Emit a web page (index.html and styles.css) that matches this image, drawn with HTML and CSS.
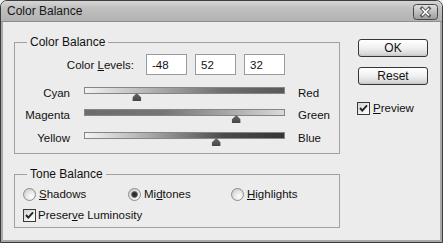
FILE: index.html
```html
<!DOCTYPE html>
<html>
<head>
  <title>Color Balance</title>
  <link rel="stylesheet" href="styles.css">
</head>
<body>
  <div class="window">
    <div class="titlebar">
      <span class="title">Color Balance</span>
      <span class="close">
        <svg width="25" height="16" viewBox="0 0 25 16">
          <defs>
            <linearGradient id="closeFill" x1="0" y1="0" x2="0" y2="1">
              <stop offset="0" stop-color="#e2e2e2"/>
              <stop offset="1" stop-color="#9c9c9c"/>
            </linearGradient>
          </defs>
          <rect x="0.5" y="0.5" width="24" height="15" rx="3" fill="url(#closeFill)" stroke="#484848"/>
          <path d="M9 4.5 L16 11.5 M16 4.5 L9 11.5" stroke="#5a5a5a" stroke-width="3.4" stroke-linecap="square"/>
          <path d="M9 4.5 L16 11.5 M16 4.5 L9 11.5" stroke="#fff" stroke-width="1.7"/>
        </svg>
      </span>
    </div>

    <div class="content">
      <div class="main">
        <fieldset class="group">
          <legend>Color Balance</legend>
          <div class="levels">
            <label class="levels-label">Color <u>L</u>evels:</label>
            <input class="field" type="text" value="-48">
            <input class="field" type="text" value="52">
            <input class="field" type="text" value="32">
          </div>
          <div class="sliders">
            <span class="name">Cyan</span>
            <div class="track cyan-red"><span class="thumb" style="left: 26%"></span></div>
            <span class="end">Red</span>

            <span class="name">Magenta</span>
            <div class="track magenta-green"><span class="thumb" style="left: 76%"></span></div>
            <span class="end">Green</span>

            <span class="name">Yellow</span>
            <div class="track yellow-blue"><span class="thumb" style="left: 66%"></span></div>
            <span class="end">Blue</span>
          </div>
        </fieldset>

        <fieldset class="group tone">
          <legend>Tone Balance</legend>
          <div class="tone-body">
            <div class="radios">
              <label class="option"><span class="radio"></span><span><u>S</u>hadows</span></label>
              <label class="option"><span class="radio on"></span><span>Mi<u>d</u>tones</span></label>
              <label class="option"><span class="radio"></span><span><u>H</u>ighlights</span></label>
            </div>
            <label class="option preserve">
              <span class="box">
                <svg width="11" height="11" viewBox="0 0 11 11"><path d="M2 5 L4.3 7.6 L9 2.4" fill="none" stroke="#222" stroke-width="1.9"/></svg>
              </span>
              <span>Preser<u>v</u>e Luminosity</span>
            </label>
          </div>
        </fieldset>
      </div>

      <div class="side">
        <button class="button">OK</button>
        <button class="button reset">Reset</button>
        <label class="option preview">
          <span class="box">
            <svg width="11" height="11" viewBox="0 0 11 11"><path d="M2 5 L4.3 7.6 L9 2.4" fill="none" stroke="#222" stroke-width="1.9"/></svg>
          </span>
          <span><u>P</u>review</span>
        </label>
      </div>
    </div>
  </div>
</body>
</html>
```

FILE: styles.css
```css
html, body {
  margin: 0;
  padding: 0;
}

body {
  font-family: "Liberation Sans", Arial, sans-serif;
  font-size: 11.5px;
  color: #111;
  background: #ececec;
}

.window {
  width: 443px;
  height: 243px;
  box-sizing: border-box;
  border: 1px solid #3c3c3c;
  border-radius: 7px 7px 0 0;
  background: #ececec;
  display: flex;
  flex-direction: column;
  overflow: hidden;
}

.titlebar {
  height: 21px;
  flex: none;
  box-sizing: border-box;
  display: flex;
  align-items: center;
  justify-content: space-between;
  padding: 0 4px 0 6px;
  background: linear-gradient(to bottom, #d6d6d6 0%, #c0c0c0 35%, #b2b2b2 100%);
  border-bottom: 1px solid #8e8e8e;
}

.title {
  font-size: 12px;
  color: #161616;
}

.close {
  display: flex;
  margin-top: 1px;
}

.content {
  flex: 1;
  display: flex;
  padding: 13px 0 0 11px;
  border: 0 solid #a9a9a9;
  border-width: 0 2px 2px 2px;
}

.main {
  width: 326px;
  flex: none;
}

.group {
  margin: 0;
  padding: 5px 0 6px 0;
  border: 1px solid #a0a0a0;
  min-width: 0;
}

.group legend {
  padding: 0 3px;
  margin-left: 12px;
  line-height: 14px;
  font-size: 12px;
}

.levels {
  display: flex;
  align-items: center;
  gap: 8px;
}

.levels-label {
  width: 119px;
  margin-right: 4px;
  text-align: right;
}

.field {
  width: 41px;
  height: 21px;
  box-sizing: border-box;
  border: 1px solid #9a9a9a;
  padding: 0 5px;
  margin: 0;
  font: inherit;
  color: #111;
  background: #fff;
}

.sliders {
  display: grid;
  grid-template-columns: 55px 215px auto;
  grid-template-rows: 22px 23px 15px;
  align-items: start;
  margin-top: 12px;
}

.name {
  text-align: right;
  line-height: 14px;
  margin-top: -1px;
}

.end {
  padding-left: 13px;
  line-height: 14px;
  margin-top: -1px;
}

.track {
  position: relative;
  width: 201px;
  height: 7px;
  margin-left: 14px;
  box-sizing: border-box;
  border: 1px solid #858585;
}

.cyan-red {
  background: linear-gradient(to right, #f2f2f2, #b8b8b8 30%, #707070 68%, #585858);
}

.magenta-green {
  background: linear-gradient(to right, #6c6c6c, #767676 40%, #a8a8a8 72%, #dadada);
}

.yellow-blue {
  background: linear-gradient(to right, #f4f4f4, #b4b4b4 28%, #4a4a4a 70%, #353535);
}

.thumb {
  position: absolute;
  top: 100%;
  width: 9px;
  height: 8px;
  transform: translateX(-50%);
  background: linear-gradient(to bottom, #6a6a6a, #454545);
  clip-path: polygon(50% 0, 100% 55%, 100% 100%, 0 100%, 0 55%);
}

.tone {
  margin-top: 13px;
  padding: 6px 0 5px 0;
}

.tone-body {
  padding-left: 8px;
}

.radios {
  display: grid;
  grid-template-columns: 105px 103px auto;
}

.option {
  display: flex;
  align-items: center;
  gap: 3px;
  line-height: 14px;
}

.preserve {
  margin-top: 7px;
  gap: 2px;
}

.radio {
  width: 13px;
  height: 13px;
  box-sizing: border-box;
  border-radius: 50%;
  border: 1px solid #8c8c8c;
  background: radial-gradient(circle at 65% 70%, #fff 0, #e6e6e6 45%, #c2c2c2 100%);
}

.radio.on {
  background:
    radial-gradient(circle at 50% 50%, #222 0, #3c3c3c 2.4px, #8a8a8a 3.2px, transparent 3.8px),
    radial-gradient(circle at 65% 70%, #fff 0, #e6e6e6 45%, #c2c2c2 100%);
}

.box {
  width: 13px;
  height: 13px;
  box-sizing: border-box;
  border: 1px solid #3a3a3a;
  background: linear-gradient(135deg, #d2d2d2, #f4f4f4 70%, #fff);
  display: flex;
  align-items: center;
  justify-content: center;
}

.side {
  width: 70px;
  margin-left: 18px;
  padding-top: 4px;
  display: flex;
  flex-direction: column;
}

.button {
  height: 18px;
  padding: 0;
  box-sizing: border-box;
  border: 1px solid #353535;
  border-radius: 3px;
  background: linear-gradient(to bottom, #ffffff, #f0f0f0 50%, #dadada 85%, #c4c4c4);
  font: inherit;
  font-size: 12px;
  color: #111;
}

.reset {
  margin-top: 10px;
}

.preview {
  margin-top: 16px;
  margin-left: -1px;
}
```
